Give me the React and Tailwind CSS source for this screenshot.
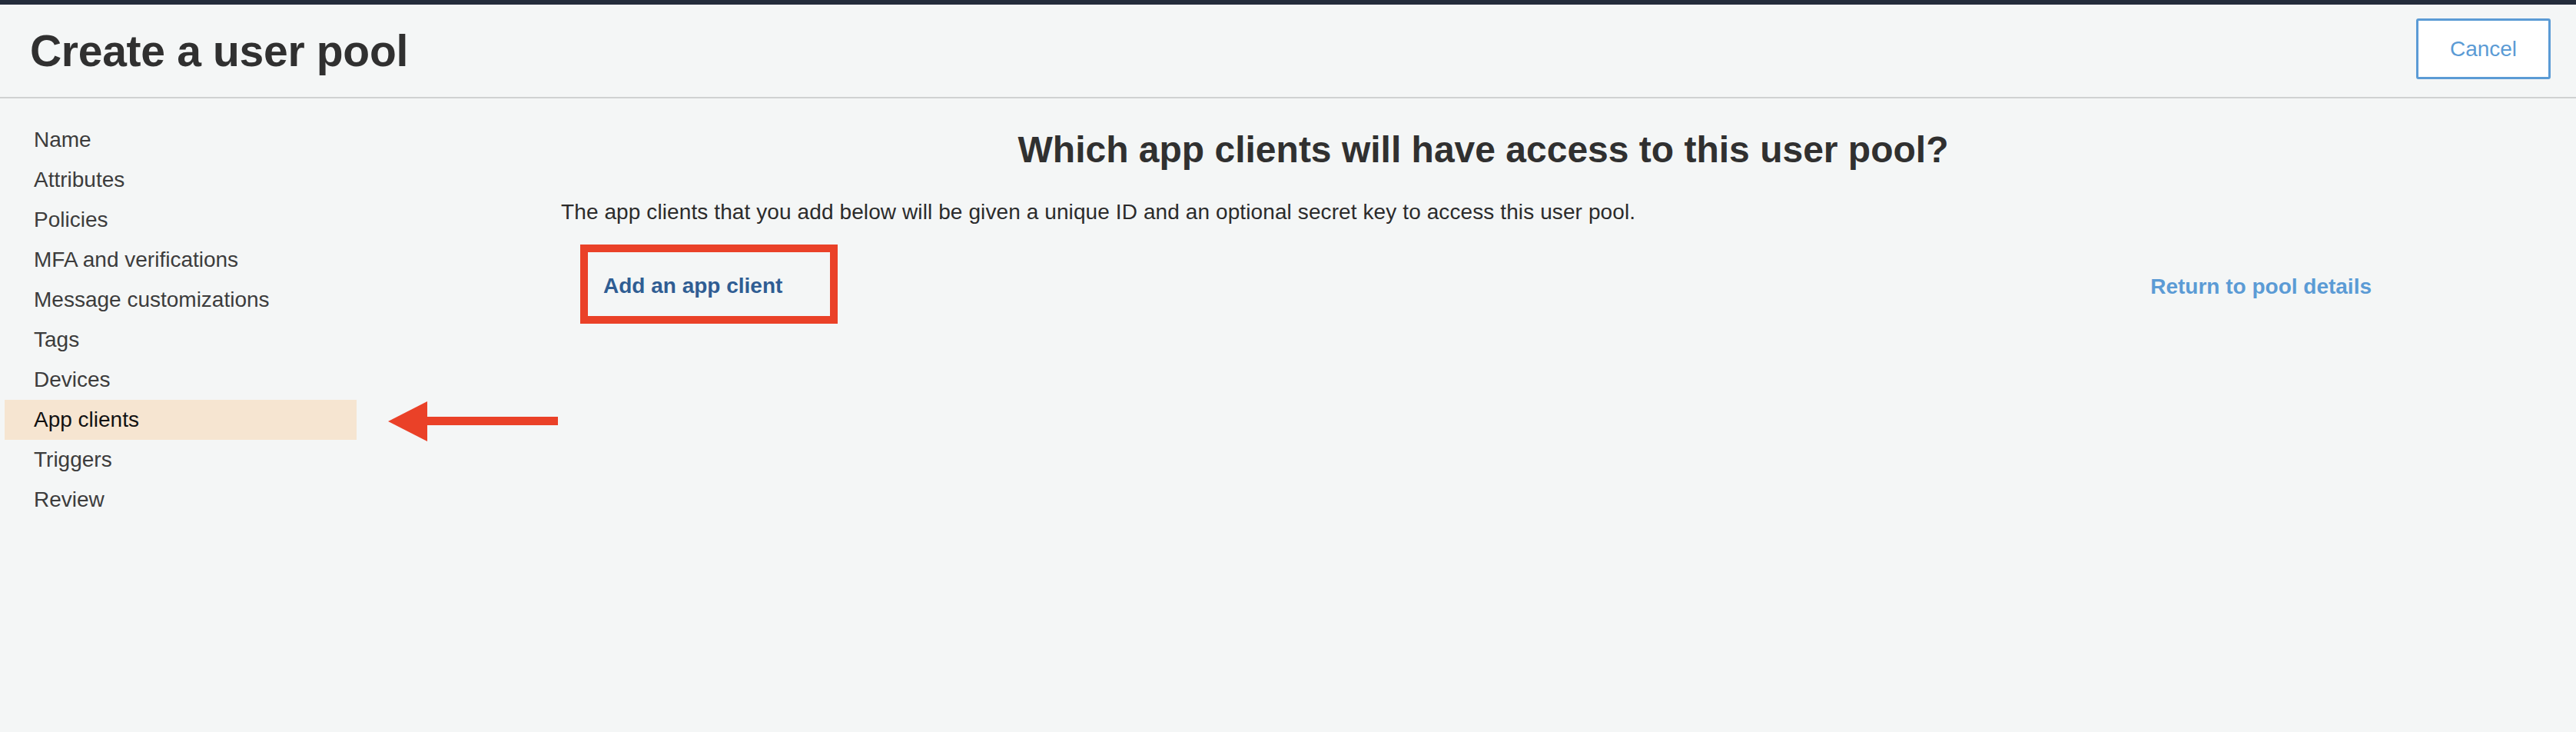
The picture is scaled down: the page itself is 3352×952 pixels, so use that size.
import { useState } from "react";

const steps = [
  "Name",
  "Attributes",
  "Policies",
  "MFA and verifications",
  "Message customizations",
  "Tags",
  "Devices",
  "App clients",
  "Triggers",
  "Review",
];

const LeftArrow = () => (
  <svg
    className="absolute left-[505px] top-[522px]"
    width="222"
    height="52"
    viewBox="0 0 222 52"
  >
    <polygon points="0,26 51,0 51,52" fill="#ea4128" />
    <rect x="50" y="20" width="171" height="11" fill="#ea4128" />
  </svg>
);

const App = () => {
  const [active] = useState("App clients");

  return (
    <div className="relative min-h-screen bg-[#f4f6f6] font-['Liberation_Sans',Arial,sans-serif] text-[#333]">
      <div className="h-[6px] bg-[#242c3b]" />

      {/* Header */}
      <header className="h-[122px] flex items-center justify-between pl-[39px] pr-[33px] border-b-2 border-[#d0d2d2]">
        <h1 className="text-[57px] leading-[64px] font-bold text-[#303030] tracking-[-0.3px]">
          Create a user pool
        </h1>
        <button className="w-[175px] h-[79px] bg-white border-[3px] border-[#5b9bd5] rounded-[3px] text-[28px] text-[#5b9bd5] mb-[5px]">
          Cancel
        </button>
      </header>

      <div className="flex">
        {/* Steps nav */}
        <nav className="ml-[6px] w-[458px] pt-[28px]">
          {steps.map((s) => (
            <div
              key={s}
              className={`h-[52px] flex items-center pl-[38px] text-[28px] ${
                s === active ? "bg-[#f6e5d1] text-[#111]" : "text-[#3c3c3c]"
              }`}
            >
              {s}
            </div>
          ))}
        </nav>

        {/* Content */}
        <main className="ml-[266px] w-[2400px] pt-[39px]">
          <h2 className="text-center text-[48px] leading-[56px] font-bold text-[#303030]">
            Which app clients will have access to this user pool?
          </h2>
          <p className="mt-[37px] text-[28px] leading-[32px] tracking-[0.1px] text-[#2b2b2b]">
            The app clients that you add below will be given a unique ID and an optional secret key to access this user pool.
          </p>
          <div className="mt-[26px] flex items-center justify-between pl-[25px] pr-[44px]">
            <div className="w-[335px] h-[103px] border-[10px] border-[#ea4128] flex items-center pl-[20px] pt-[4px]">
              <a className="text-[28px] font-bold text-[#2f5d93] cursor-pointer">Add an app client</a>
            </div>
            <a className="mt-[6px] text-[28px] font-bold text-[#5b9bd5] cursor-pointer">Return to pool details</a>
          </div>
        </main>
      </div>

      <LeftArrow />
    </div>
  );
};

export default App;
